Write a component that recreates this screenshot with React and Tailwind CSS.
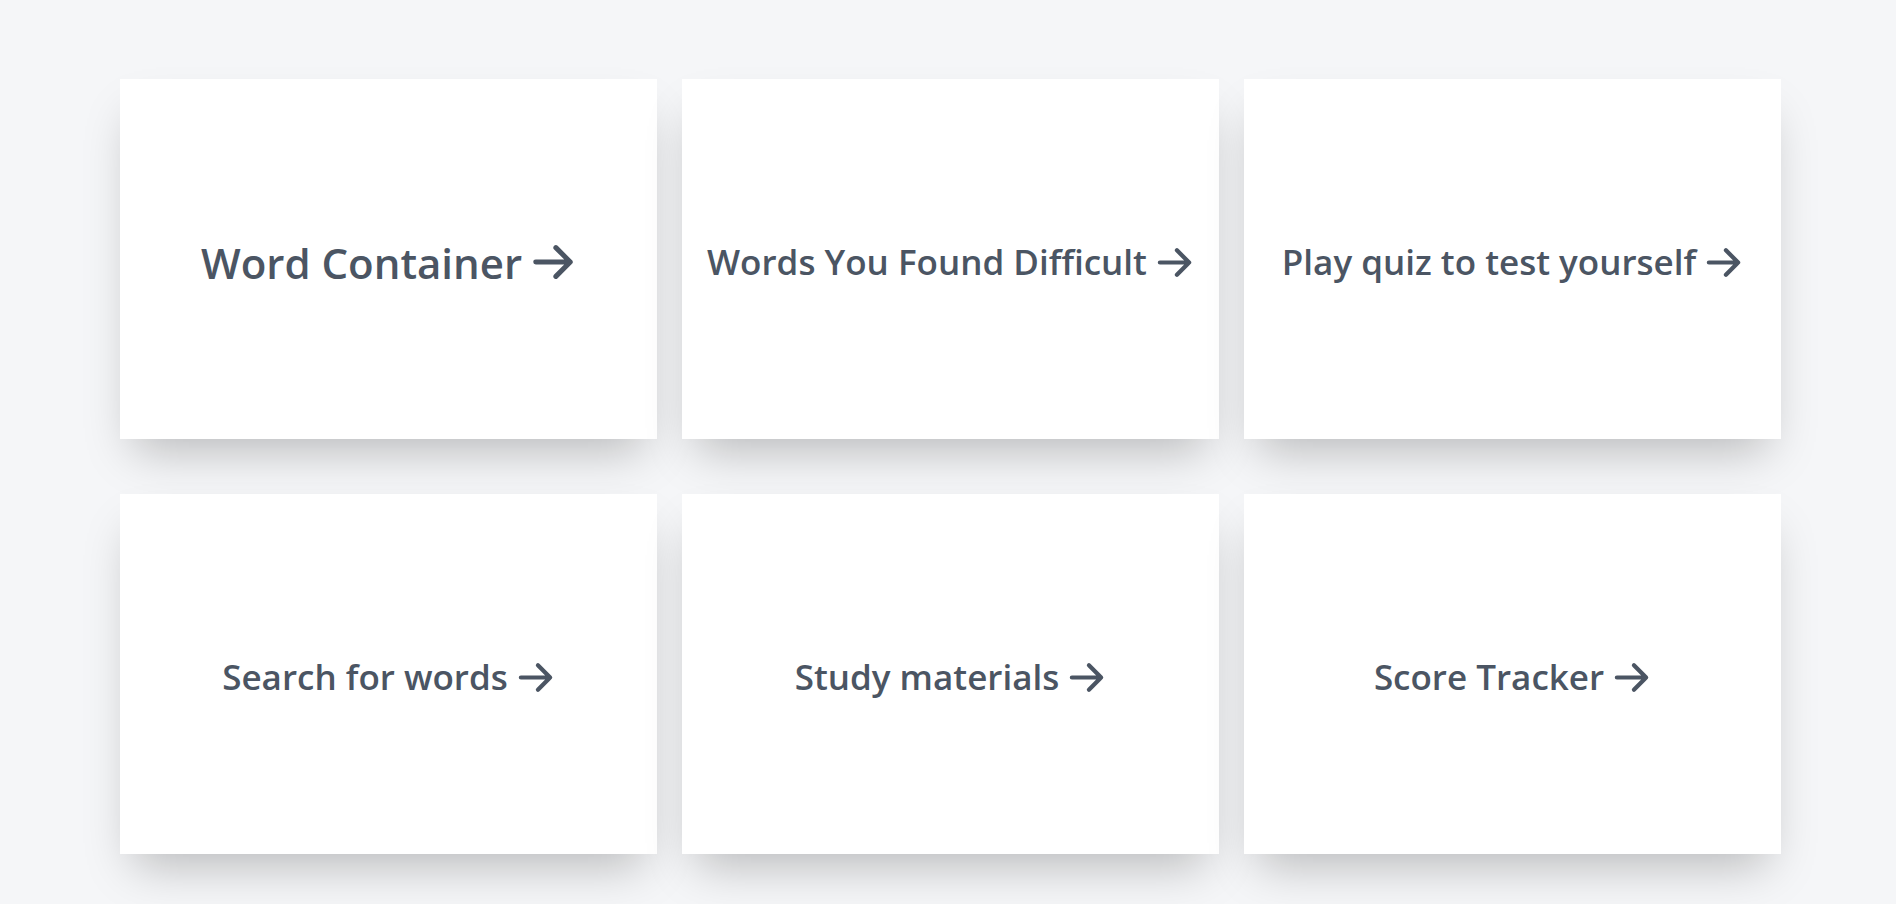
const cards = [
  { title: "Word Container", big: true },
  { title: "Words You Found Difficult" },
  { title: "Play quiz to test yourself" },
  { title: "Search for words" },
  { title: "Study materials" },
  { title: "Score Tracker" },
];

const Arrow = ({ className }) => (
  <svg viewBox="0 0 24 24" fill="none" stroke="currentColor" strokeWidth={2.6} strokeLinecap="round" strokeLinejoin="round" className={className}>
    <path d="M13.5 4.5 21 12m0 0-7.5 7.5M21 12H3" />
  </svg>
);

export default function App() {
  return (
    <div className="min-h-screen bg-[#f5f6f8] font-['Open_Sans','Noto_Sans',sans-serif]">
      <div className="grid grid-cols-3 gap-x-[25px] gap-y-[55px] w-[1661px] ml-[120px] pt-[79px] pb-[50px]">
        {cards.map((c) => (
          <a
            key={c.title}
            href="#"
            className="h-[360px] pt-[6px] bg-white shadow-[0_25px_45px_-14px_rgba(0,0,0,0.25)] flex items-center justify-center gap-2 text-[#4b5563] font-semibold"
          >
            <span className={c.big ? "text-[42px]" : "text-[35px]"}>{c.title}</span>
            <Arrow className={c.big ? "w-[46px] h-[46px]" : "w-[39px] h-[39px]"} />
          </a>
        ))}
      </div>
    </div>
  );
}
